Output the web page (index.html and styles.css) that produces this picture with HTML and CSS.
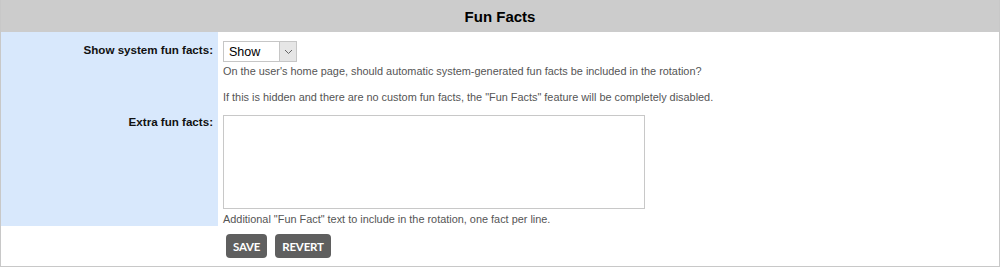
FILE: index.html
```html
<!DOCTYPE html>
<html lang="en">
<head>
    <meta charset="UTF-8">
    <meta name="viewport" content="width=device-width, initial-scale=1.0">
    <title>Fun Facts</title>
    <link rel="stylesheet" href="styles.css">
</head>
<body>
    <div class="panel">
        <h2 class="panel-title">Fun Facts</h2>
        <form id="funFactsForm">
            <table class="form-table">
                <tr class="row-first">
                    <td class="label-cell"><label for="showSystem">Show system fun facts:</label></td>
                    <td class="field-cell">
                        <span class="select-wrap">
                            <select id="showSystem" name="showSystem">
                                <option>Show</option>
                                <option>Hide</option>
                            </select>
                            <span class="select-arrow">
                                <svg width="9" height="6" viewBox="0 0 9 6"><path d="M1 1 L4.5 4.5 L8 1" fill="none" stroke="#666" stroke-width="1"/></svg>
                            </span>
                        </span>
                        <p class="help first">On the user's home page, should automatic system-generated fun facts be included in the rotation?</p>
                        <p class="help">If this is hidden and there are no custom fun facts, the "Fun Facts" feature will be completely disabled.</p>
                    </td>
                </tr>
                <tr class="row-second">
                    <td class="label-cell"><label for="extraFacts">Extra fun facts:</label></td>
                    <td class="field-cell">
                        <textarea id="extraFacts" name="extraFacts"></textarea>
                        <p class="help">Additional "Fun Fact" text to include in the rotation, one fact per line.</p>
                    </td>
                </tr>
                <tr class="row-buttons">
                    <td></td>
                    <td class="button-cell">
                        <div class="buttons">
                            <button type="submit" class="btn">SAVE</button>
                            <button type="reset" class="btn">REVERT</button>
                        </div>
                    </td>
                </tr>
            </table>
        </form>
    </div>
</body>
</html>
```

FILE: styles.css
```css
body {
    margin: 0;
    padding: 0;
    font-family: "Liberation Sans", Arial, sans-serif;
    background: #fff;
}
.panel {
    width: 998px;
    height: 266px;
    border: 1px solid #c8c8c8;
    border-top: none;
}
.panel-title {
    margin: 0;
    height: 32px;
    line-height: 33px;
    background: #cccccc;
    text-align: center;
    font-size: 15px;
    font-weight: bold;
    color: #000;
}
.form-table {
    border-collapse: collapse;
    width: 100%;
}
.form-table td {
    padding: 0;
    vertical-align: top;
}
.label-cell {
    width: 212px;
    background: #d8e8fc;
    text-align: right;
    padding: 11px 5px 0 0 !important;
    font-size: 11.6px;
    line-height: 13px;
    font-weight: bold;
    color: #111;
}
.field-cell {
    padding: 11px 5px 0 5px !important;
}
.row-first .field-cell {
    padding-top: 9px !important;
}
.select-wrap {
    position: relative;
    display: inline-block;
    width: 74px;
    height: 21px;
    vertical-align: top;
}
.select-wrap select {
    appearance: none;
    -webkit-appearance: none;
    width: 74px;
    height: 21px;
    margin: 0;
    padding: 0 0 0 5px;
    border: 1px solid #c6c6c6;
    background: #fff;
    font-family: "Liberation Sans", Arial, sans-serif;
    font-size: 12.5px;
    color: #000;
    border-radius: 0;
}
.select-arrow {
    position: absolute;
    right: 1px;
    top: 1px;
    width: 16px;
    height: 19px;
    background: #e6e6e6;
    border-left: 1px solid #c6c6c6;
    display: flex;
    align-items: center;
    justify-content: center;
    pointer-events: none;
}
.help {
    margin: 13px 0 0 0;
    font-size: 10.9px;
    line-height: 13px;
    color: #555;
}
.help.first {
    margin-top: 3px;
}
textarea {
    display: block;
    box-sizing: border-box;
    width: 422px;
    height: 94px;
    margin: 0;
    border: 1px solid #c8c8c8;
    resize: none;
}
.row-second .help {
    margin-top: 4px;
}
.button-cell {
    padding: 8px 0 0 8px !important;
}
.buttons {
    display: flex;
    gap: 8px;
}
.btn {
    height: 24px;
    margin: 0;
    padding: 0 7px;
    border: none;
    border-radius: 4px;
    background: #5f5f5f;
    color: #fff;
    font-family: Lato, "Liberation Sans", sans-serif;
    font-size: 11.5px;
    font-weight: bold;
    letter-spacing: -0.2px;
    cursor: pointer;
}
```
